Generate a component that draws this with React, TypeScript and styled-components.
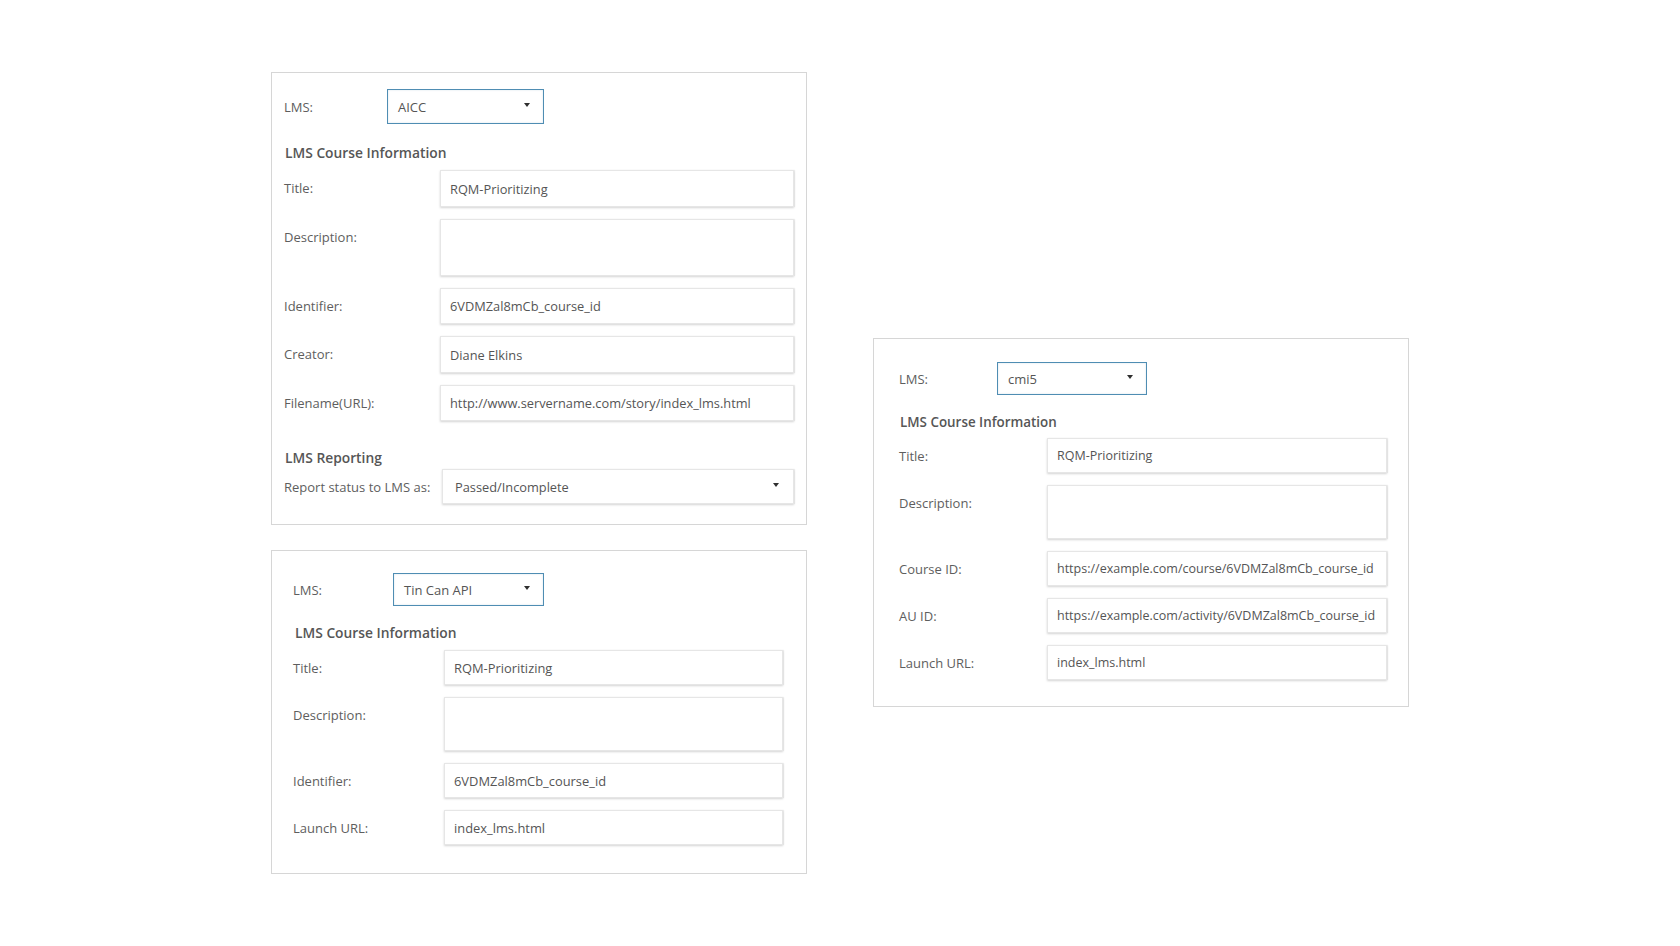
import React from "react";
import styled, { createGlobalStyle } from "styled-components";

const Global = createGlobalStyle`
  html, body { margin: 0; padding: 0; background: #ffffff; }
  body { font-family: "Open Sans", "Noto Sans", "Liberation Sans", sans-serif; color: #595959; }
  * { box-sizing: border-box; }
`;

const Page = styled.div`
  display: flex;
  align-items: flex-start;
  gap: 66px;
  padding: 72px 0 0 271px;
  min-height: 946px;
`;

const Column = styled.div`
  display: flex;
  flex-direction: column;
  gap: 25px;
`;

const RightColumn = styled.div`
  padding-top: 266px;
`;

const Panel = styled.section<{ $w: number; $pad: string; $font: number }>`
  width: ${(p) => p.$w}px;
  border: 1px solid #d6d6d6;
  padding: ${(p) => p.$pad};
  display: flex;
  flex-direction: column;
  background: #fff;
  font-size: ${(p) => p.$font}px;
`;

const LmsRow = styled.div<{ $label: number }>`
  display: grid;
  grid-template-columns: ${(p) => p.$label}px auto;
  align-items: center;
  justify-content: start;
`;

const Label = styled.div<{ $top?: number }>`
  font-size: 13px;
  line-height: 20px;
  color: #5e5e5e;
  padding-top: ${(p) => p.$top ?? 0}px;
  white-space: nowrap;
`;

const Dropdown = styled.div<{ $w: number; $h: number }>`
  width: ${(p) => p.$w}px;
  height: ${(p) => p.$h}px;
  border: 1px solid #4f8db3;
  box-shadow: inset 0 0 2px rgba(79, 141, 179, 0.25);
  display: flex;
  align-items: center;
  justify-content: space-between;
  padding: 0 13px 0 10px;
  font-size: 13px;
  color: #555;
`;

const Caret = styled.span`
  width: 0;
  height: 0;
  border-left: 3.5px solid transparent;
  border-right: 3.5px solid transparent;
  border-top: 4.5px solid #2f2f2f;
  margin-top: -3px;
`;

const Heading = styled.h3<{ $mt: number; $mb: number; $indent?: number; $size?: number }>`
  margin: ${(p) => p.$mt}px 0 ${(p) => p.$mb}px ${(p) => p.$indent ?? 1}px;
  font-size: ${(p) => p.$size ?? 13.8}px;
  line-height: 20px;
  font-weight: 600;
  color: #565656;
`;

const Fields = styled.div<{ $gap: number }>`
  display: flex;
  flex-direction: column;
  gap: ${(p) => p.$gap}px;
`;

const FieldRow = styled.div<{ $label: number }>`
  display: grid;
  grid-template-columns: ${(p) => p.$label}px 1fr;
  align-items: start;
`;

const Input = styled.div<{ $h: number }>`
  height: ${(p) => p.$h}px;
  border: 1px solid #e6e6e6;
  box-shadow: 0 1px 2px rgba(0, 0, 0, 0.16), 1px 0 1px rgba(0, 0, 0, 0.06);
  display: flex;
  align-items: flex-start;
  padding: ${(p) => Math.round((p.$h - 22) / 2)}px 6px 0 9px;
  font-size: inherit;
  line-height: 20px;
  color: #555;
  white-space: nowrap;
  overflow: hidden;
  background: #fff;
`;

const WideSelect = styled(Input)`
  justify-content: space-between;
  align-items: center;
  padding: 0 14px 0 12px;
`;

type Field = { label: string; value?: string; h: number };

function FieldList({ fields, label, gap }: { fields: Field[]; label: number; gap: number }) {
  return (
    <Fields $gap={gap}>
      {fields.map((f) => (
        <FieldRow key={f.label} $label={label}>
          <Label $top={Math.round((Math.min(f.h, 36) - 22) / 2) + 1}>{f.label}</Label>
          <Input $h={f.h}>{f.value ?? ""}</Input>
        </FieldRow>
      ))}
    </Fields>
  );
}

function LmsSelect({ value, label, w, h }: { value: string; label: number; w: number; h: number }) {
  return (
    <LmsRow $label={label}>
      <Label>LMS:</Label>
      <Dropdown $w={w} $h={h}>
        <span>{value}</span>
        <Caret />
      </Dropdown>
    </LmsRow>
  );
}

export default function App() {
  return (
    <>
      <Global />
      <Page>
        <Column>
          <Panel $w={536} $pad="16px 12px 20px 12px" $font={12.8}>
            <LmsSelect value="AICC" label={103} w={157} h={35} />
            <Heading $mt={19} $mb={7}>LMS Course Information</Heading>
            <FieldList
              label={156}
              gap={12}
              fields={[
                { label: "Title:", value: "RQM-Prioritizing", h: 37 },
                { label: "Description:", h: 57 },
                { label: "Identifier:", value: "6VDMZal8mCb_course_id", h: 36 },
                { label: "Creator:", value: "Diane Elkins", h: 37 },
                { label: "Filename(URL):", value: "http://www.servername.com/story/index_lms.html", h: 36 },
              ]}
            />
            <Heading $mt={27} $mb={1}>LMS Reporting</Heading>
            <FieldRow $label={158}>
              <Label $top={8}>Report status to LMS as:</Label>
              <WideSelect $h={35}>
                <span>Passed/Incomplete</span>
                <Caret />
              </WideSelect>
            </FieldRow>
          </Panel>

          <Panel $w={536} $pad="22px 23px 28px 21px" $font={12.9}>
            <LmsSelect value="Tin Can API" label={100} w={151} h={33} />
            <Heading $mt={17} $mb={7} $indent={2}>LMS Course Information</Heading>
            <FieldList
              label={151}
              gap={12}
              fields={[
                { label: "Title:", value: "RQM-Prioritizing", h: 35 },
                { label: "Description:", h: 54 },
                { label: "Identifier:", value: "6VDMZal8mCb_course_id", h: 35 },
                { label: "Launch URL:", value: "index_lms.html", h: 35 },
              ]}
            />
          </Panel>
        </Column>

        <RightColumn>
          <Panel $w={536} $pad="23px 21px 26px 25px" $font={12.5}>
            <LmsSelect value="cmi5" label={98} w={150} h={33} />
            <Heading $mt={17} $mb={6} $size={13.4}>LMS Course Information</Heading>
            <FieldList
              label={148}
              gap={12}
              fields={[
                { label: "Title:", value: "RQM-Prioritizing", h: 35 },
                { label: "Description:", h: 54 },
                { label: "Course ID:", value: "https://example.com/course/6VDMZal8mCb_course_id", h: 35 },
                { label: "AU ID:", value: "https://example.com/activity/6VDMZal8mCb_course_id", h: 35 },
                { label: "Launch URL:", value: "index_lms.html", h: 35 },
              ]}
            />
          </Panel>
        </RightColumn>
      </Page>
    </>
  );
}
